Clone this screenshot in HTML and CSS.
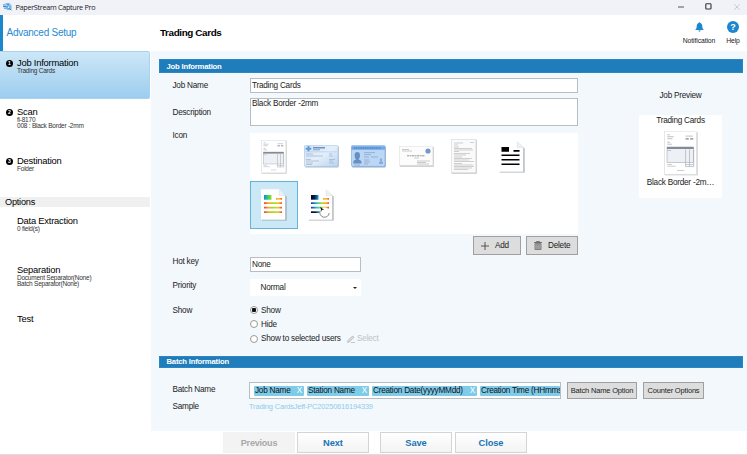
FILE: index.html
```html
<!DOCTYPE html>
<html lang="en">
<head>
<meta charset="utf-8">
<title>PaperStream Capture Pro</title>
<link rel="stylesheet" href="styles.css">
</head>
<body>
<svg width="0" height="0" class="defs">
  <defs>
    <linearGradient id="warm"><stop offset="0" stop-color="#ff9d1c"/><stop offset=".5" stop-color="#ffc928"/><stop offset="1" stop-color="#f2552c"/></linearGradient>
    <linearGradient id="rainbow"><stop offset="0" stop-color="#e8452c"/><stop offset=".25" stop-color="#f6a623"/><stop offset=".55" stop-color="#9be02c"/><stop offset=".8" stop-color="#f6c623"/><stop offset="1" stop-color="#ee4a2c"/></linearGradient>
    <linearGradient id="cool"><stop offset="0" stop-color="#1587e0"/><stop offset=".5" stop-color="#2ccf6a"/><stop offset="1" stop-color="#9be01c"/></linearGradient>
    <linearGradient id="dark"><stop offset="0" stop-color="#04040c"/><stop offset=".5" stop-color="#06205a"/><stop offset="1" stop-color="#16a3e8"/></linearGradient>
    <linearGradient id="full"><stop offset="0" stop-color="#123a9c"/><stop offset=".3" stop-color="#23b8c8"/><stop offset=".6" stop-color="#a4df2c"/><stop offset=".85" stop-color="#f9b023"/><stop offset="1" stop-color="#ee4a2c"/></linearGradient>
    <linearGradient id="idbg" x1="0" y1="0" x2="1" y2="1"><stop offset="0" stop-color="#cfe2f7"/><stop offset=".5" stop-color="#e4effb"/><stop offset="1" stop-color="#b9d4f2"/></linearGradient>
    <symbol id="invoice" viewBox="0 0 26 34">
      <rect x=".8" y=".8" width="25" height="33" fill="#d2d2d2"/>
      <rect x=".3" y=".3" width="24.6" height="32.6" fill="#fff" stroke="#dadada" stroke-width=".5"/>
      <path d="M2.5 2.7h2M2.5 4.2h5M2.5 5.7h4M2.5 8.4h2M2.5 9.9h3.5M16.5 3.7h5.5" stroke="#a0a0a5" stroke-width=".5"/>
      <path d="M16.5 5.8h2.4M20 5.8h2.4" stroke="#85888d" stroke-width=".9"/>
      <rect x="2.3" y="12" width="20.4" height="12" fill="#edf1f6" stroke="#9aa1aa" stroke-width=".4"/>
      <path d="M2.3 12.8h20.4" stroke="#858b95" stroke-width="1.6"/>
      <path d="M2.5 14.7h3M16.5 14v13M19.5 14v13M22.7 14v13M16.5 25.5h6.2M16.5 27h6.2" stroke="#a4abb5" stroke-width=".5"/>
      <path d="M2.5 25.4h3.5M2.5 26.7h6.5M10 30h5.5" stroke="#b2b2b5" stroke-width=".5"/>
    </symbol>
    <symbol id="page" viewBox="0 0 26 32">
      <path d="M.8 1h18L25.600 7.500v24.100H.8z" fill="#8a969c" fill-opacity=".75"/>
      <path d="M0 .2h18.200L24.300 6.600v24.200H0z" fill="#fff"/>
      <path d="M18.200.4v6.200h6" fill="#eef1f3" stroke="#ccd3d6" stroke-width=".4"/>
    </symbol>
  </defs>
</svg>
<div class="window">
  <header class="titlebar">
    <svg class="app-icon" viewBox="0 0 10 9"><path d="M2.8.5h4L9 2.6v4.6H4" fill="#b9dcf5" stroke="#3b97d6" stroke-width=".7"/><path d="M0 2.2h3M0 4h4M1 5.8h3M4 2h3" stroke="#147bcb" stroke-width="1"/><circle cx="6.2" cy="4.7" r="1.6" fill="#dff1ff" stroke="#147bcb" stroke-width=".8"/><path d="M7.3 6l2 2.2" stroke="#147bcb" stroke-width="1"/></svg>
    <span class="app-name">PaperStream Capture Pro</span>
    <svg class="win-min" viewBox="0 0 6 6"><path d="M0 3h6" stroke="#555" stroke-width="1"/></svg>
    <svg class="win-max" viewBox="0 0 7 7"><rect x=".8" y=".8" width="5.2" height="5.2" rx=".8" fill="none" stroke="#333" stroke-width="1.1"/></svg>
    <svg class="win-close" viewBox="0 0 6 6"><path d="M.3.3l5.4 5.4M5.7.3L.3 5.7" stroke="#b9bcc4" stroke-width=".7"/></svg>
  </header>
  <div class="topbar">
    <div class="setup">Advanced Setup</div>
    <h1>Trading Cards</h1>
    <div class="tool notification">
      <svg viewBox="0 0 10 12"><path d="M5 .6c.6 0 .9.4.9.9 1.6.5 2.2 1.9 2.2 3.7 0 2 .5 2.9 1.4 3.600v.6H.5v-.6c.9-.7 1.4-1.600 1.400-3.600 0-1.800.6-3.200 2.200-3.700 0-.5.3-.9.9-.9zM3.600 10h2.800c-.2.8-.7 1.200-1.400 1.200S3.800 10.800 3.600 10z" fill="#1d86cf"/></svg>
      <span>Notification</span>
    </div>
    <div class="tool help">
      <div class="help-mark">?</div>
      <span>Help</span>
    </div>
  </div>
  <div class="workspace">
    <nav class="sidebar">
      <div class="step active"><i>1</i><div><b>Job Information</b><p>Trading Cards</p></div></div>
      <div class="step"><i>2</i><div><b>Scan</b><p>fi-8170</p><p>008 : Black Border -2mm</p></div></div>
      <div class="step last"><i>3</i><div><b>Destination</b><p>Folder</p></div></div>
      <div class="options">Options</div>
      <div class="step plain"><div><b>Data Extraction</b><p>0 field(s)</p></div></div>
      <div class="step plain"><div><b>Separation</b><p>Document Separator(None)</p><p>Batch Separator(None)</p></div></div>
      <div class="step plain"><div><b>Test</b></div></div>
    </nav>
    <main>
      <h2 class="section">Job Information</h2>
      <div class="job">
        <div class="form">
          <div class="row name"><label>Job Name</label><div class="input">Trading Cards</div></div>
          <div class="row desc"><label>Description</label><div class="input area">Black Border -2mm</div></div>
          <div class="row icons"><label>Icon</label>
            <div class="panel">
              <div class="cell"><svg width="26" height="34"><use href="#invoice"/></svg></div>
              <div class="cell"><svg width="35" height="23" viewBox="0 0 35 23"><rect x=".8" y="1" width="34" height="21.6" rx="1.5" fill="#aebccb"/><rect x=".4" y=".4" width="33.6" height="21" rx="1.3" fill="url(#idbg)" stroke="#a9c3e2" stroke-width=".6"/><path d="M4.500 1v5.500M1.700 3.700h5.600" stroke="#5c9bd8" stroke-width="1.900"/><path d="M9 2.800h12" stroke="#577ca9" stroke-width="1.200"/><path d="M9 4.800h7" stroke="#6f8dae" stroke-width=".8"/><path d="M1 6.800h32" stroke="#a9c8ec" stroke-width=".6"/><path d="M2 9h7M25 9h3M2 11h17M25 11h4M2 14.500h5M25 14.500h6M2 16h13M25 16h4M2 18h7M25 18h5M2 19.500h6" stroke="#94a8be" stroke-width=".6"/></svg></div>
              <div class="cell"><svg width="35" height="23" viewBox="0 0 35 23"><rect x=".8" y="1" width="34" height="21.6" rx="1.5" fill="#92abc9"/><rect x=".4" y=".4" width="33.6" height="21" rx="1.3" fill="#bbd7f5" stroke="#78a8dc" stroke-width=".6"/><path d="M.6 3h33.200" stroke="#70a9e5" stroke-width="3.600"/><path d="M3 3h27" stroke="#4f88cb" stroke-width="1.400" stroke-dasharray="1.200 .6"/><path d="M2.300 18.500V17c0-1.500 1.700-2 3-2.400C4 13.500 3.600 12 3.600 10c0-2 1-3 2.700-3s2.700 1 2.700 3-.4 3.500-1.700 4.600c1.300.4 3.200.9 3.200 2.400v1.500z" fill="#6690c2"/><path d="M13 7.600h11M13 9.600h7M13 12h5M20 12h7M13 15h5M13 17h6M13 19h4M3 20h6" stroke="#8099ba" stroke-width=".6"/><path d="M28 19v-1.500c0-.8 1-.9 1.400-1.200-.8-.8-.8-3 .6-3s1.400 2.200.6 3c.6.300 1.400.400 1.400 1.200V19z" fill="#86acd7"/></svg></div>
              <div class="cell"><svg width="35" height="21" viewBox="0 0 35 21"><rect x=".8" y="1" width="34" height="19.8" fill="#c9c9c9"/><rect x=".3" y=".3" width="33.6" height="19" fill="#fcfcfc" stroke="#ddd" stroke-width=".5"/><circle cx="29" cy="5" r="2.6" fill="#7498ca"/><path d="M3 3.500h7M3 5h10M15 12h5M18 15h13M18 16.500h9M18 18h12" stroke="#a8a8a8" stroke-width=".6"/><path d="M8 9.800h18" stroke="#8c8c8c" stroke-width=".9" stroke-dasharray="2 .5"/></svg></div>
              <div class="cell"><svg width="26" height="35" viewBox="0 0 26 35"><rect x=".8" y=".8" width="25" height="34" fill="#c9c9c9"/><rect x=".3" y=".3" width="24.6" height="33.5" fill="#fafafa" stroke="#d4d4d4" stroke-width=".5"/><path d="M3 4h9M19 3.500h4M3 6h4M3 8h5M3 9.500h18M3 11h19M3 12.500h5M3 14.500h16M3 16h12M3 18h8M3 19.500h18M3 21h15M3 22.500h20M3 24.500h8M3 26h19M3 27.500h20M3 29h18M3 30.500h14" stroke="#b2b2b2" stroke-width=".6"/></svg></div>
              <div class="cell"><svg width="26" height="32" viewBox="0 0 26 32"><use href="#page"/><path d="M2.500 6h7.500v4.700H2.500zM14.500 9h6v1.700h-6zM2.500 13.500h18v1.600h-18zM2.500 18h18v1.600h-18zM2.500 22.500h18v1.600h-18z"/></svg></div>
              <div class="cell selected"><svg width="26" height="32" viewBox="0 0 26 32"><use href="#page"/><path d="M3 6h7.500v4.700H3z" fill="url(#cool)"/><path d="M15 9h6v1.700h-6z" fill="url(#warm)"/><path d="M3 13.300h18v1.700H3zM3 17.800h18v1.700H3zM3 22.300h18V24H3z" fill="url(#rainbow)"/></svg></div>
              <div class="cell"><svg width="26" height="32" viewBox="0 0 26 32"><use href="#page"/><path d="M3 6h7.500v4.700H3z" fill="url(#dark)"/><path d="M15 9h6v1.700h-6z" fill="url(#warm)"/><path d="M3 13.300h18v1.700H3zM3 17.800h18v1.700H3z" fill="url(#full)"/><path d="M3 22.300h9V24H3z" fill="url(#dark)"/><circle cx="16.500" cy="23.500" r="5" fill="#fff"/><path d="M12.300 21.500a4.700 4.700 0 1 0 8.900 2.500" fill="none" stroke="#777" stroke-width=".9"/><path d="M12.200 17.800l4 3.200-2.200-.2-.4 2z" fill="#111"/></svg></div>
            </div>
          </div>
          <div class="actions">
            <button class="grey add"><svg width="8" height="8" viewBox="0 0 8 8"><path d="M4 0v8M0 4h8" stroke="#555" stroke-width="1"/></svg>Add</button>
            <button class="grey delete"><svg width="8" height="9" viewBox="0 0 8 9"><path d="M0 1.500h8M2.600 1.200V.4h2.800v.8" stroke="#555" stroke-width=".8" fill="none"/><path d="M1 2.700h6v5.900H1z" fill="#bbb" stroke="#666" stroke-width=".8"/><path d="M3 2.700v5.500M5 2.700v5.500" stroke="#666" stroke-width=".7"/></svg>Delete</button>
          </div>
          <div class="row hotkey"><label>Hot key</label><div class="input">None</div></div>
          <div class="row priority"><label>Priority</label><div class="select">Normal<span></span></div></div>
          <div class="row show"><label>Show</label>
            <div class="radios">
              <div class="radio"><span class="dot on"></span>Show</div>
              <div class="radio"><span class="dot"></span>Hide</div>
              <div class="radio"><span class="dot"></span>Show to selected users
                <svg class="pencil" width="8" height="8" viewBox="0 0 8 8"><path d="M1 5.500L5.600.9l1.400 1.400-4.600 4.600-1.900.5zM4 7.500h4" fill="#d5dadd" stroke="#b5babd" stroke-width=".8"/></svg><em>Select</em></div>
            </div>
          </div>
        </div>
        <aside class="preview">
          <h3>Job Preview</h3>
          <div class="card">
            <p>Trading Cards</p>
            <svg width="34" height="45" viewBox="0 0 26 34"><use href="#invoice"/></svg>
            <p>Black Border -2m…</p>
          </div>
        </aside>
      </div>
      <h2 class="section batch">Batch Information</h2>
      <div class="batch-row">
        <label>Batch Name</label>
        <div class="chips">
          <span class="chip c1">Job Name<u>X</u></span>
          <span class="chip c2">Station Name<u>X</u></span>
          <span class="chip c3">Creation Date(yyyyMMdd)<u>X</u></span>
          <span class="chip c4">Creation Time (HHmms</span>
        </div>
        <button class="grey opt">Batch Name Option</button>
        <button class="grey cnt">Counter Options</button>
      </div>
      <div class="sample"><label>Sample</label><span>Trading CardsJeff-PC20250616194339</span></div>
    </main>
  </div>
  <footer>
    <button class="nav disabled">Previous</button>
    <button class="nav">Next</button>
    <button class="nav save">Save</button>
    <button class="nav close">Close</button>
  </footer>
</div>
</body>
</html>
```

FILE: styles.css
```css
* { box-sizing: border-box; margin: 0; padding: 0; }
body { width: 747px; height: 455px; overflow: hidden; background: #fff; font-family: "Liberation Sans", Arial, sans-serif; font-size: 8.2px; letter-spacing: -.23px; color: #222; white-space: nowrap; }
svg { display: block; flex: none; }
.defs { position: absolute; }
button { font-family: inherit; letter-spacing: inherit; color: #222; }
.window { display: flex; flex-direction: column; height: 455px; }

.titlebar { height: 15px; background: #f0f2f8; display: flex; align-items: center; padding-left: 3px; padding-bottom: 2px; }
.app-icon { width: 9px; height: 8px; margin-right: 3.5px; }
.app-name { font: 7.3px "Open Sans", sans-serif; letter-spacing: -.33px; color: #222; flex: 1; }
.win-min { width: 6px; height: 6px; margin-right: 21px; }
.win-max { width: 7px; height: 7px; margin-right: 22px; }
.win-close { width: 6px; height: 6px; margin-right: 7px; }

.topbar { height: 36px; display: flex; align-items: stretch; }
.setup { width: 151px; border-left: 3px solid #1b87cc; padding-left: 3.5px; font-size: 10px; letter-spacing: -.25px; line-height: 36px; color: #1f8ad0; }
h1 { flex: 1; padding-left: 9px; font-size: 9.9px; letter-spacing: -.38px; line-height: 36px; color: #000; }
.tool { display: flex; flex-direction: column; align-items: center; font-size: 6.8px; letter-spacing: -.1px; line-height: 8px; }
.notification { width: 40px; margin-right: 4px; padding-top: 6px; }
.notification svg { width: 9px; height: 12px; margin-bottom: 3.5px; }
.help { width: 20px; margin-right: 4px; padding-top: 6px; }
.help-mark { width: 12px; height: 12px; border-radius: 50%; background: #1d86cf; color: #fff; font-size: 9px; font-weight: bold; line-height: 12px; text-align: center; margin-bottom: 3.5px; }

.workspace { height: 380px; display: flex; }
.sidebar { width: 151px; padding-right: 1px; }
.step { height: 49px; display: flex; padding: 6px 0 0 6px; }
.step.active { height: 48px; margin-bottom: 1px; border: 1px solid #a8d3ee; border-left: 0; border-radius: 0 2px 2px 0; background: linear-gradient(#cde7f7, #9ccdf0); padding-top: 5px; }
.step i { width: 7px; height: 7px; border-radius: 50%; background: #000; color: #fff; font: bold 5px/7px "Liberation Sans", sans-serif; letter-spacing: 0; text-align: center; margin: 3px 4px 0 0; }
.step b { display: block; font-weight: normal; font-size: 9.4px; letter-spacing: -.22px; line-height: 11px; color: #000; }
.step p { font-size: 6.5px; letter-spacing: -.23px; line-height: 6.4px; color: #333; }
.step.last { height: 48px; }
.options { height: 10px; margin-bottom: 2px; background: #f0f0f0; padding-left: 5px; font-size: 9.2px; line-height: 10px; color: #000; }
.step.plain { padding: 6px 0 0 17px; }

main { flex: 1; min-width: 0; background: #f3f8fd; padding: 8px 4px 0 8px; }
.section { height: 14px; background: #1f7dbb; color: #fff; font-size: 7.7px; letter-spacing: -.2px; line-height: 13px; padding-left: 6.5px; border: 1px solid #2e86c1; }
.job { display: flex; height: 283px; }
.form { width: 419px; }
.row { display: flex; }
.row label { width: 91px; padding-left: 13.5px; flex: none; line-height: 10px; }
.row > :last-child { flex: 1; }
.input { background: #fff; border: 1px solid #b8bdc2; padding-left: 1px; line-height: 13px; }
.name { margin-top: 5px; height: 15px; }
.name label { padding-top: 2.5px; }
.desc { margin-top: 5px; height: 28px; }
.desc label { padding-top: 10px; }
.area { line-height: 10px; }
.icons { margin-top: 7px; height: 101px; }
.icons label { margin-top: -2.5px; }
.panel { background: #fff; display: grid; grid-template-columns: repeat(6, 47.6px); grid-template-rows: 47.5px 48px; }
.cell { display: flex; align-items: center; justify-content: center; }
.cell.selected { background: #cbe8f6; border: 1px solid #62b4dc; }
.actions { display: flex; justify-content: flex-end; gap: 5px; margin-top: 2px; height: 19px; }
.grey { background: #ddd; border: 1px solid #a0a0a0; font-size: 8.2px; display: flex; align-items: center; }
.add { width: 48px; padding-left: 7px; gap: 6px; }
.delete { width: 52px; padding-left: 7px; gap: 6px; }
.hotkey { margin-top: 2px; height: 15px; width: 202px; }
.priority { margin-top: 7px; height: 17px; width: 202px; }
.priority label { padding-top: 2px; }
.select { background: #fff; display: flex; align-items: center; justify-content: space-between; padding: 0 4px 0 10.5px; }
.select span { border: 2px solid transparent; border-top-color: #222; border-bottom: 0; }
.show { margin-top: 7px; }
.show label { padding-top: 2.5px; }
.radio { height: 14.3px; display: flex; align-items: center; }
.dot { width: 8px; height: 8px; border: 1px solid #999; border-radius: 50%; background: #fff; margin-right: 3px; }
.dot.on { background: radial-gradient(circle, #111 0 2px, #fff 2.5px); }
.pencil { margin-left: 6px; margin-right: 2.5px; }
.radio em { font-style: normal; color: #bcc3c9; }

.preview { width: 83px; margin-left: 61px; text-align: center; }
h3 { font-size: 8.2px; font-weight: normal; line-height: 10px; margin: 18px 0 14px; }
.card { height: 83px; background: #fff; display: flex; flex-direction: column; align-items: center; }
.card p { line-height: 10px; padding-top: 1px; }
.card svg { margin: 5px 0 1px; }

.batch { height: 12px; line-height: 10px; }
.batch-row { display: flex; height: 17px; margin-top: 14px; }
.batch-row label, .sample label { width: 90px; padding-left: 13.5px; line-height: 16px; flex: none; }
.chips { width: 312px; border: 1px solid #b8bdc2; background: #fff; overflow: hidden; display: flex; align-items: center; gap: 3px; padding-left: 4px; margin-right: 6px; }
.chip { height: 10px; background: #7ecbea; border-radius: 1px; display: flex; flex: none; justify-content: space-between; padding: 0 2px 0 1px; line-height: 10px; color: #111; }
.chip u { text-decoration: none; color: #fff; }
.c1 { width: 50px; }
.c2 { width: 62px; }
.c3 { width: 105px; }
.c4 { width: 80px; padding-right: 0; }
.opt, .cnt { font-size: 7.5px; letter-spacing: -.18px; justify-content: center; }
.opt { width: 70px; margin-right: 6px; }
.cnt { width: 61px; }
.sample { display: flex; line-height: 16px; height: 16px; }
.sample span { font-size: 7.4px; letter-spacing: -.14px; color: #8fcbea; }

footer { height: 24px; border-bottom: 1px solid #ddd; display: flex; padding: 1px 0 1px 223px; }
.nav { width: 72px; height: 21px; margin-right: 2px; border: 1px solid #d4d4d4; background: linear-gradient(#fff, #f3f3f3); color: #1a74b4; font-size: 9.3px; letter-spacing: -.1px; font-weight: bold; }
.nav.disabled { border-color: #f2f2f2; background: #f3f3f3; color: #a8a8a8; font-size: 9px; letter-spacing: -.2px; }
.nav.save { margin-left: 9px; }
.nav.close { margin-left: 1px; }
```
